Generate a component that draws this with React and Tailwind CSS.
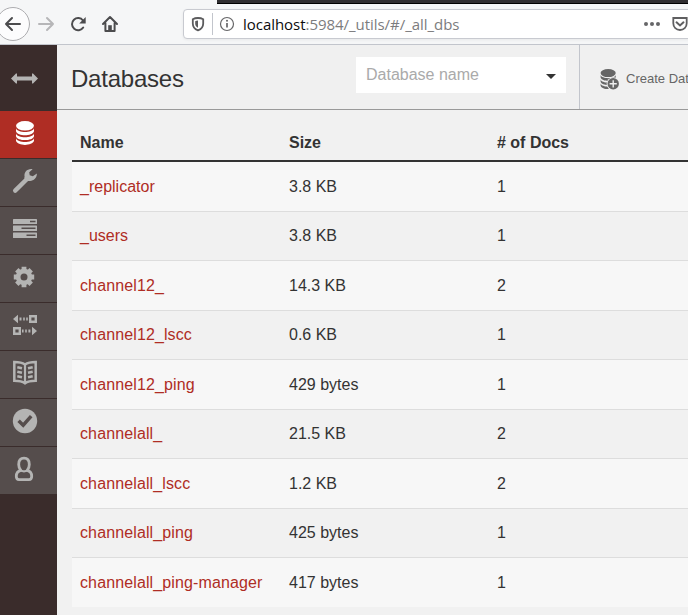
import React from 'react';

const rows = [
  ['_replicator', '3.8 KB', 1],
  ['_users', '3.8 KB', 1],
  ['channel12_', '14.3 KB', 2],
  ['channel12_lscc', '0.6 KB', 1],
  ['channel12_ping', '429 bytes', 1],
  ['channelall_', '21.5 KB', 2],
  ['channelall_lscc', '1.2 KB', 2],
  ['channelall_ping', '425 bytes', 1],
  ['channelall_ping-manager', '417 bytes', 1],
];

const Disks = () => (
  <g>
    <ellipse cx="9" cy="4.8" rx="9" ry="4.8" />
    <path d="M0 7.2C1.5 12.2 16.5 12.2 18 7.2V10.2C16.5 15.6 1.5 15.6 0 10.2Z" />
    <path d="M0 12.4C1.5 17.4 16.5 17.4 18 12.4V15.2C16.5 20.4 1.5 20.4 0 15.2Z" />
    <path d="M0 17.2C1.5 22.2 16.5 22.2 18 17.2V19.8C16.5 25.3 1.5 25.3 0 19.8Z" />
  </g>
);

const DatabaseIcon = () => (
  <svg width="18" height="24" fill="#fff"><Disks /></svg>
);

const WrenchIcon = () => (
  <svg width="26" height="26" viewBox="0 0 26 26">
    <path d="M3.2 22.6L15 11" stroke="currentColor" strokeWidth="4.4" strokeLinecap="round" />
    <path d="M20.6 1.2C15.5 .2 11.7 4.2 12.6 8.7C11.5 10 14.5 14 17 12.9C21 13.6 25 10.4 24.9 5.6L20.8 8.3L17.7 7.3L17.2 4.2Z" fill="currentColor" />
  </svg>
);

const ServerIcon = () => (
  <svg width="26" height="26" viewBox="0 0 26 26" fill="currentColor">
    <rect x="1" y="3" width="24" height="5" rx=".6" />
    <rect x="1" y="9.5" width="24" height="5.5" rx=".6" />
    <rect x="1" y="16.5" width="24" height="5.5" rx=".6" />
    <path d="M18 5.5H23.5M9.5 12.2H23.5M14.5 19.2H23.5" stroke="#554d4c" strokeWidth="1.5" />
  </svg>
);

const GearIcon = () => (
  <svg width="22" height="22" viewBox="0 0 22 22">
    <path d="M11 .8V21.2M.8 11H21.2M3.8 3.8L18.2 18.2M18.2 3.8L3.8 18.2" stroke="currentColor" strokeWidth="4.8" />
    <circle cx="11" cy="11" r="8.2" fill="currentColor" />
    <circle cx="11" cy="11" r="3.5" fill="#554d4c" />
  </svg>
);

const ReplicationIcon = () => (
  <svg width="26" height="22" viewBox="0 0 26 22" fill="currentColor">
    <path d="M1 5L6 .8V9.2ZM25 17L20 12.8V21.2Z" />
    <path d="M7.5 3.5h2v3h-2zM11.2 3.5h1.6v3h-1.6zM14.2 3.5h1.6v3h-1.6zM10 15.5h1.6v3H10zM13.2 15.5h1.6v3h-1.6zM16.4 15.5h2v3h-2z" />
    <path d="M18.2 2.2H23.8V7.8H18.2ZM2.2 14.2H7.8V19.8H2.2Z" fill="none" stroke="currentColor" strokeWidth="2.4" />
  </svg>
);

const BookIcon = () => (
  <svg width="26" height="26" viewBox="0 0 26 26" fill="none" stroke="currentColor">
    <path d="M13 4.5C10 2.4 6 2 2.3 2V20.7C6 20.7 10 21 13 23.3C16 21 20 20.7 23.7 20.7V2C20 2 16 2.4 13 4.5Z" strokeWidth="2.5" />
    <path d="M13 4V23" strokeWidth="2.2" />
    <path d="M5.3 7.2L10 8.3M5.3 11.7L10 12.8M5.3 16.2L10 17.3M20.7 7.2L16 8.3M20.7 11.7L16 12.8M20.7 16.2L16 17.3" strokeWidth="2.5" />
  </svg>
);

const CheckIcon = () => (
  <svg width="26" height="26" viewBox="0 0 26 26">
    <circle cx="13" cy="13" r="12.2" fill="currentColor" />
    <path d="M6.6 12.8L11.2 17.2L19.2 8.2" fill="none" stroke="#554d4c" strokeWidth="3.5" />
  </svg>
);

const UserIcon = () => (
  <svg width="20" height="26" viewBox="0 0 20 26" fill="none" stroke="currentColor" strokeWidth="2.8">
    <path d="M10 2.2C6.2 2.2 4.7 5 4.7 8.4C4.7 11 5.6 13 6.8 14.4C4 15.2 2.3 17.4 2.3 20.2C2.3 22.8 3.3 23.6 5 23.6H15C16.7 23.6 17.7 22.8 17.7 20.2C17.7 17.4 16 15.2 13.2 14.4C14.4 13 15.3 11 15.3 8.4C15.3 5 13.8 2.2 10 2.2Z" />
    <path d="M6.6 14.4Q10 16.4 13.4 14.4" strokeWidth="2.2" />
  </svg>
);

const navIcons = [
  [WrenchIcon, 'pl-3 pt-[9px]'],
  [ServerIcon, 'pl-3 pt-[9px]'],
  [GearIcon, 'pl-[12.5px] pt-[11px]'],
  [ReplicationIcon, 'pl-3 pt-[11px]'],
  [BookIcon, 'pl-3 pt-[9px]'],
  [CheckIcon, 'pl-3 pt-[9px]'],
  [UserIcon, 'pl-[14px] pt-[9px]'],
];

function BrowserBar() {
  return (
    <div className="relative h-[45px] shrink-0 overflow-hidden border-b border-[#c2c5cc] bg-[#f5f6f7]">
      <div className="absolute left-[217px] right-0 top-0 h-1 border-b border-black bg-[#302e31]" />
      <div className="flex h-full pt-[7px]">
        <svg className="shrink-0" width="183" height="36" viewBox="0 7 183 36" fill="none" strokeLinecap="round" strokeLinejoin="round">
          <circle cx="13" cy="24" r="16.5" fill="#fcfcfd" stroke="#adadb0" />
          <path d="M20 24H6M12 18L6 24L12 30" stroke="#4c4c4e" strokeWidth="2" />
          <path d="M39 24H53M47 18L53 24L47 30" stroke="#b6b6b8" strokeWidth="2" />
          <path d="M83.2 27.5A6.1 6.1 0 1 1 83 20.5" stroke="#4c4c4e" strokeWidth="2" />
          <path d="M85.7 17V23.5H79.2Z" fill="#4c4c4e" />
          <path d="M103 24L110 17L117 24M105.4 23V31H114.6V23" stroke="#4c4c4e" strokeWidth="2" />
          <path d="M108.2 30V25.2H111.8V30Z" fill="#4c4c4e" />
        </svg>
        <div className="mt-[2px] flex h-[30px] w-[520px] shrink-0 rounded-[4px] border border-[#c8cad0] bg-white shadow-[0_1px_3px_rgba(0,0,0,0.06)]">
          <svg className="shrink-0" width="59" height="28" viewBox="184 10 59 28" fill="none">
            <path d="M198 18C195.8 18 194 18.5 192.8 19.2V23.5C192.8 27 194.6 29.1 198 30.3C201.4 29.1 203.2 27 203.2 23.5V19.2C202 18.5 200.2 18 198 18Z" stroke="#5b5b5d" strokeWidth="1.8" />
            <path d="M198 20.6C196.7 20.6 195.8 20.9 195.2 21.2V23.5C195.2 25.5 196.1 26.9 198 27.7Z" fill="#5b5b5d" />
            <path d="M212.5 13V35" stroke="#c2c5cc" />
            <circle cx="227" cy="24" r="6.5" stroke="#666668" strokeWidth="1.2" />
            <path d="M227 23V27.5" stroke="#666668" strokeWidth="1.7" />
            <circle cx="227" cy="20.8" r="1" fill="#666668" />
          </svg>
          <span className="w-[400px] whitespace-nowrap font-['Open_Sans','Noto_Sans',sans-serif] text-[15px] leading-[28px] tracking-[-0.04px] text-[#7c7c7e]">
            <span className="text-[#0c0c0d]">localhost</span>:5984/_utils/#/_all_dbs
          </span>
          <svg className="shrink-0" width="60" height="28" viewBox="643 10 60 28" fill="#666668">
            <circle cx="647" cy="24" r="2" /><circle cx="653" cy="24" r="2" /><circle cx="659" cy="24" r="2" />
            <path d="M674.3 18H687.7V23.2C687.7 27.3 684.7 30 681 30C677.3 30 674.3 27.3 674.3 23.2Z" fill="none" stroke="#5f5f61" strokeWidth="1.8" />
            <path d="M677.5 22.3L681 25.5L684.5 22.3" fill="none" stroke="#5f5f61" strokeWidth="2" strokeLinecap="round" />
          </svg>
        </div>
      </div>
    </div>
  );
}

function Sidebar() {
  return (
    <nav className="w-[57px] shrink-0 bg-[#3a2c2b] text-[#b4b4b3]">
      <div className="h-[66px] pl-[11px] pt-[28px]">
        <svg width="27" height="11" viewBox="0 0 27 11" fill="currentColor">
          <path d="M0 5.5L5 .5H6V3.6H21V.5H22L27 5.5L22 10.5H21V7.6H6V10.5H5Z" />
        </svg>
      </div>
      <div className="h-12 border-b border-[#3a2c2b] bg-[#af2d24] pl-4 pt-[10px]"><DatabaseIcon /></div>
      {navIcons.map(([Icon, pad], i) => (
        <div key={i} className={`h-12 border-b border-[#3a2c2b] bg-[#554d4c] ${pad}`}><Icon /></div>
      ))}
    </nav>
  );
}

export default function App() {
  return (
    <div className="flex h-[615px] w-[688px] flex-col overflow-hidden bg-[#f1f1f1] font-['Liberation_Sans',Arial,sans-serif] text-[#333]">
      <BrowserBar />
      <div className="flex min-h-0 flex-1">
        <Sidebar />
        <main className="min-w-0 flex-1">
          <header className="flex h-[65px] overflow-hidden border-b border-[#999] bg-[#f0f0f0]">
            <h1 className="w-[299px] shrink-0 pl-[14px] pt-[16px] text-[24px] leading-9 tracking-[-0.22px]">Databases</h1>
            <div className="mt-3 flex h-9 w-[210px] shrink-0 items-center justify-between bg-white pl-[10px] pr-[10px] text-base text-[#aaa]">
              <span>Database name</span>
              <svg className="mt-[3px]" width="10" height="5" fill="#333"><path d="M0 0H10L5 5Z" /></svg>
            </div>
            <div className="ml-[13px] flex w-[200px] shrink-0 border-l border-[#c2c5cc] pl-[20px] text-[#666]">
              <svg className="mt-6 shrink-0" width="20" height="21" viewBox="0 0 20 21" fill="currentColor">
                <g transform="translate(.6 0) scale(.84 .84)"><Disks /></g>
                <circle cx="13.2" cy="14.8" r="6.6" fill="#f0f0f0" />
                <circle cx="13.2" cy="14.8" r="5.7" />
                <path d="M13.2 11.2V18.4M9.6 14.8H16.8" stroke="#f0f0f0" strokeWidth="1.4" />
              </svg>
              <span className="ml-[6px] whitespace-nowrap pt-[24px] text-[13px] leading-[20px]">Create Database</span>
            </div>
          </header>
          <table className="ml-[15px] mt-[14px] w-[620px] table-fixed border-collapse text-left text-base">
            <colgroup><col className="w-[209px]" /><col className="w-[208px]" /><col /></colgroup>
            <thead>
              <tr className="h-[38px]">
                {['Name', 'Size', '# of Docs'].map((h) => (
                  <th key={h} className="p-0 pl-2 font-bold shadow-[inset_0_-2px_0_#333]">{h}</th>
                ))}
              </tr>
            </thead>
            <tbody>
              {rows.map(([name, size, docs], i) => {
                const cell = i > 0 && i % 2 === 0 ? 'p-0 pl-2 pt-[2px]' : 'p-0 pl-2';
                return (
                  <tr key={name} className={`${i % 2 === 0 ? 'bg-[#f7f7f7]' : ''} ${i > 0 && i % 2 === 0 ? 'h-[50px]' : 'h-[49px]'} ${i ? 'shadow-[inset_0_1px_0_#ddd]' : ''}`}>
                    <td className={`${cell} text-[#af2d24] ${i > 1 ? 'tracking-[0.12px]' : ''}`}>{name}</td>
                    <td className={cell}>{size}</td>
                    <td className={cell}>{docs}</td>
                  </tr>
                );
              })}
            </tbody>
          </table>
        </main>
      </div>
    </div>
  );
}
